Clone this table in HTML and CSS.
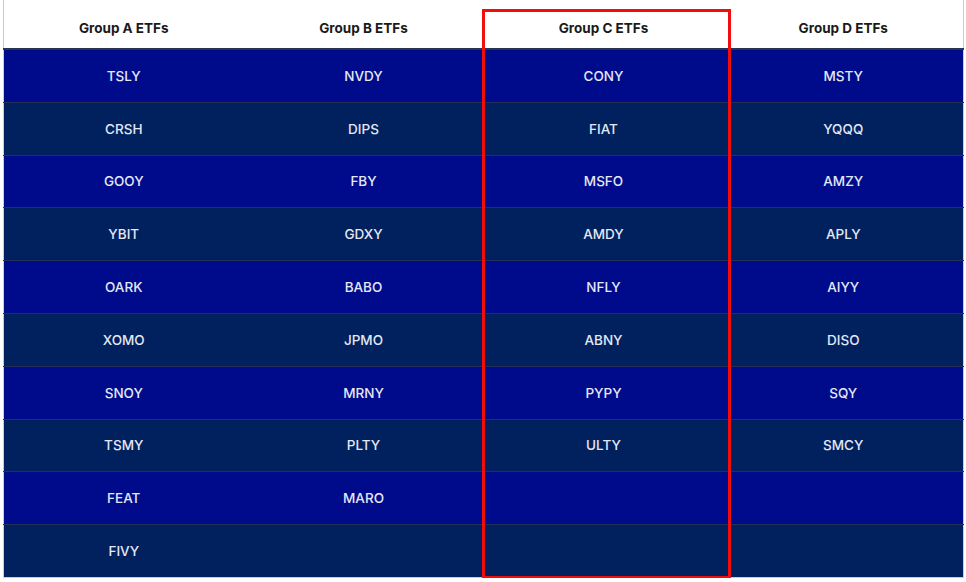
FILE: index.html
```html
<!DOCTYPE html>
<html>
<head>
<meta charset="utf-8">
<link rel="stylesheet" href="styles.css">
</head>
<body>
<div class="wrap">
  <table class="etf">
    <thead>
      <tr><th>Group A ETFs</th><th>Group B ETFs</th><th>Group C ETFs</th><th>Group D ETFs</th></tr>
    </thead>
    <tbody>
      <tr class="odd"><td>TSLY</td><td>NVDY</td><td>CONY</td><td>MSTY</td></tr>
      <tr class="even"><td>CRSH</td><td>DIPS</td><td>FIAT</td><td>YQQQ</td></tr>
      <tr class="odd"><td>GOOY</td><td>FBY</td><td>MSFO</td><td>AMZY</td></tr>
      <tr class="even"><td>YBIT</td><td>GDXY</td><td>AMDY</td><td>APLY</td></tr>
      <tr class="odd"><td>OARK</td><td>BABO</td><td>NFLY</td><td>AIYY</td></tr>
      <tr class="even"><td>XOMO</td><td>JPMO</td><td>ABNY</td><td>DISO</td></tr>
      <tr class="odd"><td>SNOY</td><td>MRNY</td><td>PYPY</td><td>SQY</td></tr>
      <tr class="even"><td>TSMY</td><td>PLTY</td><td>ULTY</td><td>SMCY</td></tr>
      <tr class="odd"><td>FEAT</td><td>MARO</td><td></td><td></td></tr>
      <tr class="even"><td>FIVY</td><td></td><td></td><td></td></tr>
    </tbody>
  </table>
  <div class="highlight"></div>
</div>
</body>
</html>
```
FILE: styles.css
```css
html, body {
  margin: 0;
  padding: 0;
  background: #ffffff;
}
.wrap {
  position: relative;
  padding: 0 0 0 3px;
  font-family: Inter, "Liberation Sans", Arial, sans-serif;
}
.etf {
  width: 961px;
  border-collapse: collapse;
  table-layout: fixed;
  border-left: 1px solid #c9cbd6;
  border-right: 1px solid #c9cbd6;
  border-bottom: 1px solid #c9cbd6;
}
.etf thead th {
  height: 40px;
  padding: 8px 0 0 0;
  font-size: 13.5px;
  font-weight: 700;
  color: #1a1a1a;
  text-align: center;
  vertical-align: middle;
  background: #ffffff;
  border-bottom: 2px solid #2a3350;
}
.etf tbody td {
  height: 51.8px;
  padding: 0;
  text-align: center;
  vertical-align: middle;
  font-size: 13.5px;
  font-weight: 500;
  color: #e4e8f4;
  border-top: 1px solid #25305a;
}
.etf tbody tr:first-child td {
  border-top: none;
}
.odd td {
  background: #000b8b;
}
.even td {
  background: #00215e;
}
.highlight {
  position: absolute;
  left: 482px;
  top: 9px;
  width: 243px;
  height: 564px;
  border: 3px solid #f20d0d;
  pointer-events: none;
}
```
